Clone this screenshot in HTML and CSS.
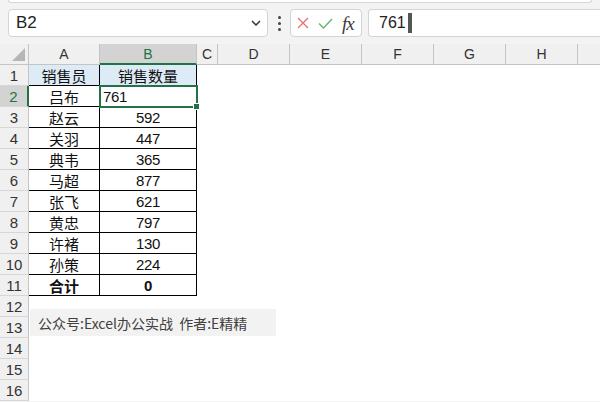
FILE: index.html
```html
<!DOCTYPE html>
<html lang="zh-CN">
<head>
    <meta charset="UTF-8">
    <title>销售数量</title>
    <link rel="stylesheet" href="styles.css">
</head>
<body>
    <div class="ribbon-edge"></div>
    <div class="toolbar">
        <div class="name-box">
            <span>B2</span>
            <svg class="chevron" width="10" height="6" viewBox="0 0 10 6"><path d="M1 1 L5 5 L9 1" fill="none" stroke="#333" stroke-width="1.5"/></svg>
        </div>
        <div class="kebab"><i></i><i></i><i></i></div>
        <div class="fx-box">
            <svg width="12" height="12" viewBox="0 0 12 12"><path d="M1 1 L11 11 M11 1 L1 11" stroke="#e8706f" stroke-width="1.3"/></svg>
            <svg width="15" height="11" viewBox="0 0 15 11"><path d="M1 5.5 L5.5 10 L14 1" fill="none" stroke="#5fb46e" stroke-width="1.3"/></svg>
            <span class="fx">fx</span>
        </div>
        <div class="formula-input">
            <span>761</span><span class="caret"></span>
        </div>
    </div>

    <div class="sheet">
        <div class="corner"><span class="tri"></span></div>
        <div class="col-head">A</div>
        <div class="col-head active">B</div>
        <div class="col-head">C</div>
        <div class="col-head">D</div>
        <div class="col-head">E</div>
        <div class="col-head">F</div>
        <div class="col-head">G</div>
        <div class="col-head">H</div>
        <div class="col-head last"></div>

        <div class="row-head">1</div>
        <div class="cell tb title">销售员</div>
        <div class="cell tb title">销售数量</div>
        <div class="blank"></div>

        <div class="row-head active">2</div>
        <div class="cell tb">吕布</div>
        <div class="cell tb num selected left">761</div>
        <div class="blank"></div>

        <div class="row-head">3</div>
        <div class="cell tb">赵云</div>
        <div class="cell tb num">592</div>
        <div class="blank"></div>

        <div class="row-head">4</div>
        <div class="cell tb">关羽</div>
        <div class="cell tb num">447</div>
        <div class="blank"></div>

        <div class="row-head">5</div>
        <div class="cell tb">典韦</div>
        <div class="cell tb num">365</div>
        <div class="blank"></div>

        <div class="row-head">6</div>
        <div class="cell tb">马超</div>
        <div class="cell tb num">877</div>
        <div class="blank"></div>

        <div class="row-head">7</div>
        <div class="cell tb">张飞</div>
        <div class="cell tb num">621</div>
        <div class="blank"></div>

        <div class="row-head">8</div>
        <div class="cell tb">黄忠</div>
        <div class="cell tb num">797</div>
        <div class="blank"></div>

        <div class="row-head">9</div>
        <div class="cell tb">许褚</div>
        <div class="cell tb num">130</div>
        <div class="blank"></div>

        <div class="row-head">10</div>
        <div class="cell tb">孙策</div>
        <div class="cell tb num">224</div>
        <div class="blank"></div>

        <div class="row-head">11</div>
        <div class="cell tb bold">合计</div>
        <div class="cell tb num bold">0</div>
        <div class="blank"></div>

        <div class="row-head">12</div>
        <div class="blank wide"></div>
        <div class="row-head">13</div>
        <div class="blank wide"></div>
        <div class="row-head">14</div>
        <div class="blank wide"></div>
        <div class="row-head">15</div>
        <div class="blank wide"></div>
        <div class="row-head">16</div>
        <div class="blank wide"></div>

        <div class="note">公众号:Excel办公实战&nbsp;&nbsp;作者:E精精</div>
    </div>
</body>
</html>
```

FILE: styles.css
```css
:root {
    --green: #217346;
    --head-bg: #f0f0f0;
    --head-line: #c4c4c4;
}

body {
    margin: 0;
    background: #f3f3f3;
    font-family: "Liberation Sans", "Noto Sans CJK SC", sans-serif;
    color: #000;
    overflow: hidden;
}

.ribbon-edge {
    height: 2px;
    margin: 0 8px;
    background: #fff;
    border: 1px solid #d6d6d6;
    border-top: none;
    border-radius: 0 0 4px 4px;
}

.toolbar {
    display: flex;
    align-items: center;
    height: 41px;
    box-sizing: border-box;
    padding: 6px 0 7px 8px;
}

.name-box {
    width: 260px;
    height: 28px;
    box-sizing: border-box;
    background: #fff;
    border: 1px solid #d4d4d4;
    border-radius: 4px;
    display: flex;
    align-items: center;
    justify-content: space-between;
    padding: 0 6px 0 7px;
    font-size: 17px;
    color: #222;
}

.kebab {
    width: 22px;
    display: flex;
    flex-direction: column;
    align-items: center;
    gap: 3px;
}

.kebab i {
    width: 3px;
    height: 3px;
    background: #444;
    border-radius: 50%;
}

.fx-box {
    width: 72px;
    height: 28px;
    box-sizing: border-box;
    background: #fff;
    border: 1px solid #d4d4d4;
    border-radius: 4px;
    display: flex;
    align-items: center;
    padding: 0 4px 0 6px;
    gap: 9px;
}

.fx {
    font-family: "Liberation Serif", serif;
    font-style: italic;
    font-size: 19px;
    color: #3c3c3c;
    letter-spacing: -1px;
    line-height: 1;
}

.formula-input {
    flex: 1;
    height: 28px;
    box-sizing: border-box;
    margin-left: 6px;
    background: #fff;
    border: 1px solid #d4d4d4;
    border-right: none;
    border-radius: 4px 0 0 4px;
    display: flex;
    align-items: center;
    padding-left: 10px;
    font-size: 16px;
    color: #222;
}

.caret {
    width: 4px;
    height: 20px;
    margin-left: 2px;
    background: #555;
}

.sheet {
    position: relative;
    display: grid;
    grid-template-columns: 29px 71px 97px 21px 72px 72px 72px 72px 72px 22px;
    grid-auto-rows: 21px;
    background: #fff;
}

.corner {
    background: var(--head-bg);
    border-right: 1px solid var(--head-line);
    border-bottom: 1px solid var(--head-line);
    display: flex;
    justify-content: flex-end;
    align-items: flex-end;
    padding: 0 3px 3px 0;
}

.tri {
    width: 13px;
    height: 13px;
    background: #b6b6b6;
    clip-path: polygon(100% 0, 100% 100%, 0 100%);
}

.col-head {
    background: var(--head-bg);
    border-right: 1px solid var(--head-line);
    border-bottom: 1px solid var(--head-line);
    display: flex;
    align-items: center;
    justify-content: center;
    font-size: 14px;
    color: #333;
}

.col-head.last {
    border-right: none;
}

.col-head.active {
    background: #d3d3d3;
    color: var(--green);
    border-bottom: 2px solid var(--green);
}

.row-head {
    grid-column: 1;
    background: var(--head-bg);
    border-right: 1px solid var(--head-line);
    border-bottom: 1px solid #d6d6d6;
    display: flex;
    align-items: center;
    justify-content: center;
    font-size: 15px;
    color: #333;
}

.row-head.active {
    background: #d3d3d3;
    color: var(--green);
    border-right: 2px solid var(--green);
}

.cell {
    display: flex;
    align-items: center;
    justify-content: center;
    font-size: 15px;
    font-family: "Noto Sans CJK SC", sans-serif;
    color: #111;
}

.cell.tb {
    border-right: 1px solid #000;
    border-bottom: 1px solid #000;
}

.cell.title {
    background: #ddebf7;
}

.cell.num {
    font-family: "Liberation Sans", sans-serif;
    font-size: 15px;
    letter-spacing: -0.4px;
}

.cell.bold {
    font-weight: bold;
}

.cell.left {
    justify-content: flex-start;
    padding-left: 3px;
}

.cell.selected {
    position: relative;
    outline: 2px solid var(--green);
    outline-offset: -1px;
    z-index: 1;
}

.cell.selected::after {
    content: "";
    position: absolute;
    right: -4px;
    bottom: -4px;
    width: 5px;
    height: 5px;
    background: var(--green);
    border: 1px solid #fff;
}

.blank {
    grid-column: 4 / -1;
}

.blank.wide {
    grid-column: 2 / -1;
}

.note {
    position: absolute;
    left: 30px;
    top: 265px;
    width: 238px;
    height: 27px;
    padding-left: 8px;
    background: #f2f2f2;
    display: flex;
    align-items: center;
    font-family: "Noto Sans CJK SC", sans-serif;
    font-size: 14px;
    color: #404040;
}
```
